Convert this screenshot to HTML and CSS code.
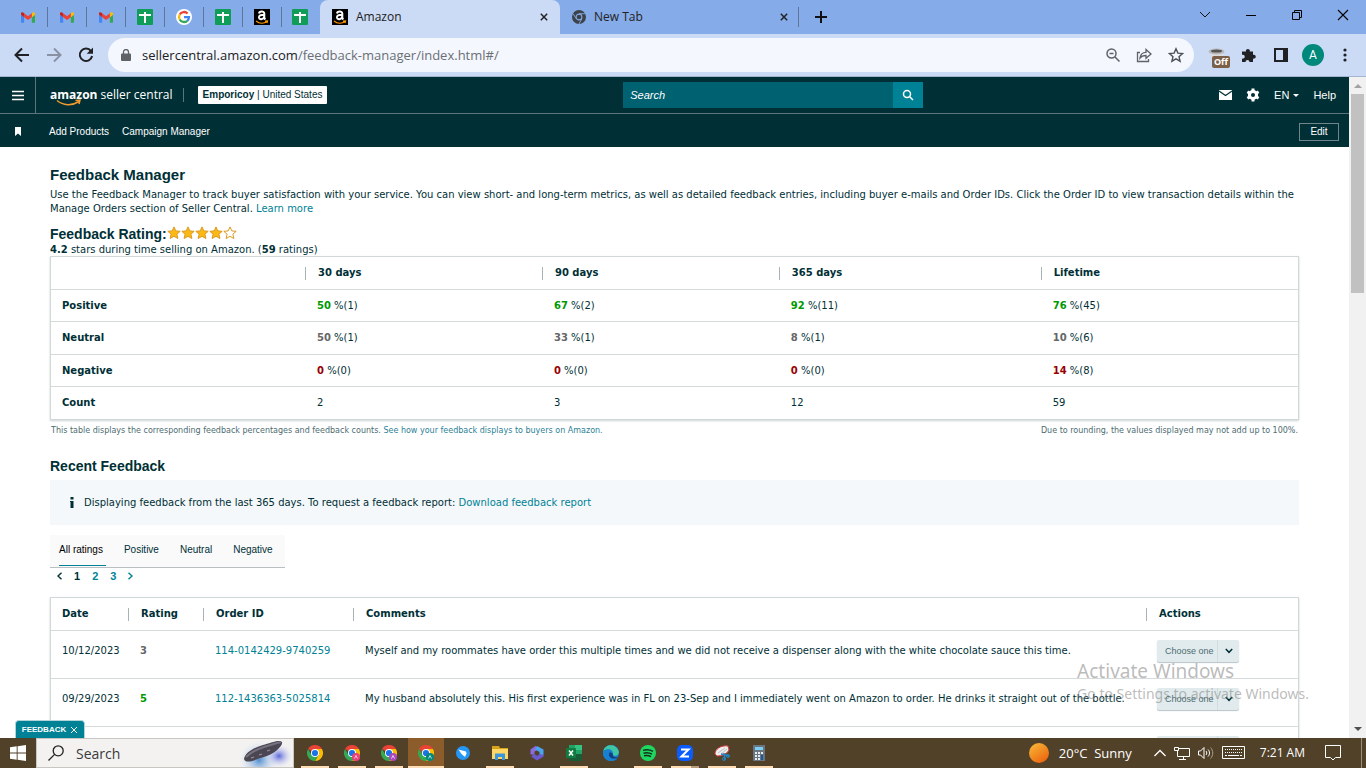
FILE: index.html
```html
<!DOCTYPE html>
<html lang="en">
<head>
<meta charset="utf-8">
<title>Amazon</title>
<link rel="stylesheet" href="styles.css">
</head>
<body>
<svg class="defs" aria-hidden="true">
  <symbol id="gmail" viewBox="0 0 16 12"><path d="M1 12h2.6V5.6L0 2.9V11a1 1 0 0 0 1 1z" fill="#4285f4"/><path d="M12.4 12H15a1 1 0 0 0 1-1V2.9l-3.6 2.7z" fill="#34a853"/><path d="M12.4 1.2v4.4L16 2.9V1.5C16 .1 14.400-.6 13.300.3z" fill="#fbbc04"/><path d="M3.600 5.600V1.200L8 4.500l4.400-3.300v4.400L8 8.900z" fill="#ea4335"/><path d="M0 1.500v1.400l3.600 2.700V1.200L2.700.5C1.600-.5 0 .2 0 1.500z" fill="#c5221f"/></symbol>
  <symbol id="sheet" viewBox="0 0 16 16"><rect width="16" height="16" rx="1" fill="#0f9d58"/><path d="M2 5h12v2H9v7H7V7H2zM7 3h2v3H7z" fill="#fff"/></symbol>
  <symbol id="google" viewBox="0 0 16 16"><circle cx="8" cy="8" r="8" fill="#fff"/><g fill="none" stroke-width="2.300"><path d="M3.700 5.500A5 5 0 0 1 11.600 4.500" stroke="#ea4335"/><path d="M3.700 10.500a5 5 0 0 1 0-5" stroke="#fbbc05"/><path d="M11.300 11.800a5 5 0 0 1-7.600-1.300" stroke="#34a853"/><path d="M8 8.100h5a5 5 0 0 1-1.700 3.700" stroke="#4285f4"/></g></symbol>
  <symbol id="amz" viewBox="0 0 16 16"><rect width="16" height="16"/><path d="M5 4.500C5.300 2.200 10.300 1.700 10.300 4.600v3.900c0 1 .3 1.300 1 2M10.200 5.800C6.500 5.800 4.800 6.600 5 8.700c.3 2.300 4.300 1.900 5.200-.7" fill="none" stroke="#fff" stroke-width="2"/><path d="M2 12c3.500 2.800 8 2.800 11 .6M11 12.200l2.500-.2-.5 2" fill="none" stroke="#f90" stroke-width="1.200"/></symbol>
  <symbol id="chrome" viewBox="0 0 16 16"><path d="M8 8L1.070 4A8 8 0 0 1 14.930 4z" fill="#ea4335"/><path d="M8 4h6.930A8 8 0 0 1 8 16l3.500-6z" fill="#fbbc04"/><path d="M1.070 4A8 8 0 0 0 8 16l3.460-6L8 8 4.540 10z" fill="#34a853"/><circle cx="8" cy="8" r="4" fill="#fff"/><circle cx="8" cy="8" r="3.100" fill="#1a73e8"/></symbol>
  <symbol id="x" viewBox="0 0 8 8"><path d="M.8.8l6.400 6.400M7.200.8L.8 7.200" fill="none" stroke="currentColor" stroke-width="1.500"/></symbol>
  <symbol id="star" viewBox="0 0 14 14"><path d="M7 .9l1.800 4 4.400.4-3.300 2.900 1 4.300L7 10.300l-3.900 2.200 1-4.300L.8 5.300l4.400-.4z" stroke="#d99a20" stroke-width="1"/></symbol>
  <symbol id="chev" viewBox="0 0 8 6"><path d="M.8 1L4 4.300 7.200 1" fill="none" stroke="#002f36" stroke-width="1.500"/></symbol>
</svg>

<div class="tabstrip">
  <div class="pinned"><svg class="gm"><use href="#gmail"/></svg></div>
  <div class="pinned"><svg class="gm"><use href="#gmail"/></svg></div>
  <div class="pinned"><svg class="gm"><use href="#gmail"/></svg></div>
  <div class="pinned"><svg class="i16"><use href="#sheet"/></svg></div>
  <div class="pinned"><svg class="i16"><use href="#google"/></svg></div>
  <div class="pinned"><svg class="i16"><use href="#sheet"/></svg></div>
  <div class="pinned"><svg class="i16"><use href="#amz"/></svg></div>
  <div class="pinned last"><svg class="i16"><use href="#sheet"/></svg></div>
  <div class="tab active"><svg class="i16"><use href="#amz"/></svg><span>Amazon</span><button aria-label="Close Amazon tab"><svg class="i8"><use href="#x"/></svg></button></div>
  <div class="tab other"><svg class="i14" viewBox="0 0 16 16"><circle cx="8" cy="8" r="8" fill="#3c4248"/><path d="M8 4.200h7M4.700 9.900L1.200 4M11.300 9.900L8 16" stroke="#85abe8" stroke-width="1"/><circle cx="8" cy="8" r="3.300" fill="#3c4248" stroke="#85abe8" stroke-width="1.200"/></svg><span>New Tab</span><button aria-label="Close New Tab"><svg class="i8"><use href="#x"/></svg></button></div>
  <button class="plus" aria-label="Open new tab"><svg class="i12" viewBox="0 0 12 12"><path d="M6 0v12M0 6h12" stroke="#111" stroke-width="2"/></svg></button>
  <div class="winctl">
    <button aria-label="Tab search"><svg class="i12" viewBox="0 0 12 12"><path d="M1 3l5 5 5-5" fill="none" stroke="#111"/></svg></button>
    <button aria-label="Minimize"><svg class="i12" viewBox="0 0 12 12"><path d="M1 6.500h10" stroke="#000"/></svg></button>
    <button aria-label="Restore"><svg class="i12" viewBox="0 0 12 12"><path d="M1.500 3.500h7v7h-7zM3.500 3V1.500h7v7H9" fill="none" stroke="#000"/></svg></button>
    <button aria-label="Close"><svg class="i12" viewBox="0 0 12 12"><path d="M1 1l10 10M11 1L1 11" stroke="#000" stroke-width="1.100"/></svg></button>
  </div>
</div>

<div class="toolbar">
  <button aria-label="Back"><svg class="i16" viewBox="0 0 16 16"><path d="M15 8H2M8 1.500L1.500 8 8 14.500" fill="none" stroke="#202124" stroke-width="2"/></svg></button>
  <button aria-label="Forward"><svg class="i16" viewBox="0 0 16 16"><path d="M1 8h13M8 1.500L14.500 8 8 14.500" fill="none" stroke="#8992a3" stroke-width="2"/></svg></button>
  <button aria-label="Reload"><svg class="i16" viewBox="0 0 16 16"><path d="M13 4.100A6.200 6.200 0 1 0 14.100 9" fill="none" stroke="#202124" stroke-width="2"/><path d="M15 .5v6.300H8.700z" fill="#202124"/></svg></button>
  <div class="omnibox">
    <svg class="lock" viewBox="0 0 10 12"><path d="M1 4.500h8a1 1 0 0 1 1 1V11a1 1 0 0 1-1 1H1a1 1 0 0 1-1-1V5.500a1 1 0 0 1 1-1z" fill="#5f6368"/><path d="M2.500 5V3a2.500 2.500 0 0 1 5 0v2" fill="none" stroke="#5f6368" stroke-width="1.300"/></svg>
    <div class="url">sellercentral.amazon.com<span>/feedback-manager/index.html#/</span></div>
    <svg class="i14" viewBox="0 0 14 14" fill="none" stroke="#5f6368" stroke-width="1.500"><circle cx="5.500" cy="5.500" r="4.500"/><path d="M9 9l4.500 4.500M3.500 5.500h4"/></svg>
    <svg class="i16" viewBox="0 0 16 16" fill="none" stroke="#5f6368" stroke-width="1.300"><path d="M4 5.500H1.500v9h11V12M4 11c.5-4 2.500-5.500 6-5.600V2.500L15 7l-5 4.300V8.500C7.500 8.500 5.500 9 4 11z"/></svg>
    <svg class="i16" viewBox="0 0 16 16" fill="none" stroke="#4d5156" stroke-width="1.400"><path d="M8 1.800l1.900 4.300 4.700.4L11 9.700l1.100 4.500L8 11.800l-4.100 2.400L5 9.700 1.400 6.500l4.700-.4z"/></svg>
  </div>
  <div class="ext">
    <svg class="cup" viewBox="0 0 22 20"><path d="M2 3h13v12H4z" fill="#dcdcdc"/><ellipse cx="8.500" cy="3.500" rx="8" ry="3" fill="#b8b8b8"/><ellipse cx="8.500" cy="3" rx="5.500" ry="1.500" fill="#555"/><rect x="4" y="8" width="18" height="12" rx="2" fill="#7b6047"/><text x="13" y="17" text-anchor="middle">Off</text></svg>
    <svg class="i14" viewBox="0 0 14 14"><path d="M0 3.500h4a2 2 0 1 1 3.800 0H11v3.300a2 2 0 1 1 0 3.700V14H7.500a2 2 0 1 0-4 0H0v-3.500a2 2 0 1 0 0-3.700z" fill="#202124"/></svg>
    <svg class="i14" viewBox="0 0 14 14"><path d="M1 1h12v12H1z" fill="none" stroke="#202124" stroke-width="2"/><path d="M9 1h5v12H9z" fill="#202124"/></svg>
    <span class="avatar">A</span>
    <svg class="dots" viewBox="0 0 4 14" fill="#202124"><circle cx="2" cy="2" r="1.600"/><circle cx="2" cy="7" r="1.600"/><circle cx="2" cy="12" r="1.600"/></svg>
  </div>
</div>

<div class="viewport">
  <div class="page">
    <header>
      <div class="top">
        <div class="brandside">
          <button class="burger" aria-label="Menu"><svg class="i12" viewBox="0 0 12 12"><path d="M0 2.500h12M0 6.500h12M0 10.500h12" stroke="#fff" stroke-width="1.300"/></svg></button>
          <a class="brand" href="#"><b>amazon</b> seller central<svg class="smile" viewBox="0 0 26 8"><path d="M1 1.500c6 5.200 15 5.500 22 1M19.500 1.500l4.500-.5-1 4" fill="none" stroke="#f29a2e" stroke-width="1.500"/></svg></a>
          <span class="bar"></span>
          <button class="store"><b>Emporicoy</b> | United States</button>
        </div>
        <form class="search"><input type="text" placeholder="Search" aria-label="Search"><button type="button" aria-label="Submit search"><svg class="i12" viewBox="0 0 12 12" fill="none" stroke="#fff" stroke-width="1.500"><circle cx="5" cy="5" r="3.500"/><path d="M7.500 7.500L11 11"/></svg></button></form>
        <nav class="tools">
          <a href="#" aria-label="Messages"><svg class="mail" viewBox="0 0 13 10"><path d="M0 0h13v10H0z" fill="#fff"/><path d="M0 1l6.500 4.500L13 1" fill="none" stroke="#002f36" stroke-width="1.200"/></svg></a>
          <a href="#" aria-label="Settings"><svg class="gear" viewBox="0 0 14 14"><circle cx="7" cy="7" r="3.500" fill="none" stroke="#fff" stroke-width="3.200"/><path d="M7 .5v13M1.400 3.750l11.200 6.500M1.400 10.250l11.200-6.500" stroke="#fff" stroke-width="3"/><circle cx="7" cy="7" r="2" fill="#002f36"/></svg></a>
          <a class="lang" href="#">EN<svg class="caret" viewBox="0 0 6 3"><path d="M0 0h6L3 3z" fill="#fff"/></svg></a>
          <a href="#">Help</a>
        </nav>
      </div>
      <div class="favs">
        <svg class="mark" viewBox="0 0 6 9"><path d="M0 0h6v9L3 6.500 0 9z" fill="#fff"/></svg>
        <a href="#">Add Products</a><a href="#">Campaign Manager</a>
        <button>Edit</button>
      </div>
    </header>

    <main>
      <h1>Feedback Manager</h1>
      <p class="intro">Use the Feedback Manager to track buyer satisfaction with your service. You can view short- and long-term metrics, as well as detailed feedback entries, including buyer e-mails and Order IDs. Click the Order ID to view transaction details within the Manage Orders section of Seller Central. <a href="#">Learn more</a></p>
      <div class="rating"><h2>Feedback Rating:</h2><span class="stars"><svg class="i14" fill="#fdb913"><use href="#star"/></svg><svg class="i14" fill="#fdb913"><use href="#star"/></svg><svg class="i14" fill="#fdb913"><use href="#star"/></svg><svg class="i14" fill="#fdb913"><use href="#star"/></svg><svg class="i14" fill="#fff"><use href="#star"/></svg></span></div>
      <p class="score"><b>4.2</b> stars during time selling on Amazon. (<b>59</b> ratings)</p>

      <table class="grid summary">
        <colgroup><col class="s1"><col class="s2"><col class="s3"><col class="s4"><col></colgroup>
        <thead><tr><th></th><th><i></i>30 days</th><th><i></i>90 days</th><th><i></i>365 days</th><th><i></i>Lifetime</th></tr></thead>
        <tbody>
          <tr class="pos"><th>Positive</th><td><b>50</b> %(1)</td><td><b>67</b> %(2)</td><td><b>92</b> %(11)</td><td><b>76</b> %(45)</td></tr>
          <tr class="neu"><th>Neutral</th><td><b>50</b> %(1)</td><td><b>33</b> %(1)</td><td><b>8</b> %(1)</td><td><b>10</b> %(6)</td></tr>
          <tr class="neg"><th>Negative</th><td><b>0</b> %(0)</td><td><b>0</b> %(0)</td><td><b>0</b> %(0)</td><td><b>14</b> %(8)</td></tr>
          <tr><th>Count</th><td>2</td><td>3</td><td>12</td><td>59</td></tr>
        </tbody>
      </table>
      <div class="notes"><span>This table displays the corresponding feedback percentages and feedback counts. <a href="#">See how your feedback displays to buyers on Amazon.</a></span><span>Due to rounding, the values displayed may not add up to 100%.</span></div>

      <h2 class="recent">Recent Feedback</h2>
      <div class="info"><svg class="inf" viewBox="0 0 4 11"><path d="M.5 0h3v2.500h-3zM0 4h3.500v7h-3V5H0z" fill="#002f36"/></svg><span>Displaying feedback from the last 365 days. To request a feedback report: <a href="#">Download feedback report</a></span></div>
      <div class="filters"><button class="on">All ratings</button><button>Positive</button><button>Neutral</button><button>Negative</button></div>
      <nav class="pager">
        <a href="#" aria-label="Previous"><svg class="ar" viewBox="0 0 5 8"><path d="M4.500.8L1 4l3.500 3.200" fill="none" stroke="#002f36" stroke-width="1.400"/></svg></a>
        <a class="cur" href="#">1</a><a href="#">2</a><a href="#">3</a>
        <a href="#" aria-label="Next"><svg class="ar" viewBox="0 0 5 8"><path d="M.5.8L4 4 .5 7.200" fill="none" stroke="#008296" stroke-width="1.400"/></svg></a>
      </nav>

      <table class="grid entries">
        <colgroup><col class="e1"><col class="e2"><col class="e3"><col><col class="e5"></colgroup>
        <thead><tr><th>Date</th><th><i></i>Rating</th><th><i></i>Order ID</th><th><i></i>Comments</th><th><i></i>Actions</th></tr></thead>
        <tbody>
          <tr class="neu"><td>10/12/2023</td><td><b>3</b></td><td><a href="#">114-0142429-9740259</a></td><td>Myself and my roommates have order this multiple times and we did not receive a dispenser along with the white chocolate sauce this time.</td><td><span class="pick"><select aria-label="Action for order 114-0142429-9740259"><option>Choose one</option></select><span><svg class="cv"><use href="#chev"/></svg></span></span></td></tr>
          <tr class="pos"><td>09/29/2023</td><td><b>5</b></td><td><a href="#">112-1436363-5025814</a></td><td>My husband absolutely this. His first experience was in FL on 23-Sep and I immediately went on Amazon to order. He drinks it straight out of the bottle.</td><td><span class="pick"><select aria-label="Action for order 112-1436363-5025814"><option>Choose one</option></select><span><svg class="cv"><use href="#chev"/></svg></span></span></td></tr>
          <tr><td></td><td></td><td></td><td></td><td><span class="pick"><select aria-label="Action"><option>Choose one</option></select><span><svg class="cv"><use href="#chev"/></svg></span></span></td></tr>
        </tbody>
      </table>
    </main>
    <button class="fb">FEEDBACK <svg class="i8" viewBox="0 0 8 8"><path d="M1 1l6 6M7 1L1 7" stroke="#fff"/></svg></button>
  </div>
  <div class="scroll"><svg class="sa" viewBox="0 0 8 4"><path d="M0 4h8L4 0z" fill="#a3a3a3"/></svg><span class="thumb"></span><svg class="sa down" viewBox="0 0 8 4"><path d="M0 0h8L4 4z" fill="#505050"/></svg></div>
  <div class="activate"><p class="big">Activate Windows</p><p>Go to Settings to activate Windows.</p></div>
</div>

<div class="taskbar">
  <button class="start" aria-label="Start"><svg class="i16" viewBox="0 0 16 16" fill="#fff"><path d="M0 2.300L6.700 1.300v6.300H0zM7.600 1.200L16 0v7.600H7.600zM0 8.400h6.700v6.300L0 13.700zM7.600 8.400H16V16l-8.400-1.200z"/></svg></button>
  <div class="tsearch">
    <svg class="i16" viewBox="0 0 16 16" fill="none" stroke="#222" stroke-width="1.300"><circle cx="10.200" cy="5.800" r="5"/><path d="M6.600 9.400L.5 15.500"/></svg>
    <input type="text" placeholder="Search" aria-label="Windows search">
    <svg class="ufo" viewBox="0 0 54 28"><defs><radialGradient id="glow"><stop offset="0" stop-color="#4f8fd0"/><stop offset="1" stop-color="#dfe2f6" stop-opacity="0"/></radialGradient><radialGradient id="glow2"><stop offset="0" stop-color="#5a68d8"/><stop offset="1" stop-color="#e0e0f8" stop-opacity="0"/></radialGradient></defs><ellipse cx="20" cy="21" rx="20" ry="19" fill="url(#glow)"/><ellipse cx="40" cy="17" rx="14" ry="12" fill="url(#glow2)"/><path d="M5 20C6 13 17 8 24 6 31 4 40 0 43 3c1 4-8 12-18 15-8 2-18 8-20 2z" fill="#4a4753"/><path d="M7 18c5-5 12-8 18-10 7-2 12-4 17-5" fill="none" stroke="#77717f" stroke-width="2"/><path d="M12 19l3-1m5-2l3-1m5-3l3-1" stroke="#a58a9d" stroke-width="1.200"/></svg>
  </div>
  <div class="apps">
    <button class="run" aria-label="Chrome"><svg class="i16"><use href="#chrome"/></svg></button>
    <button class="run" aria-label="Chrome profile 2"><svg class="i16" viewBox="0 0 16 16"><use href="#chrome"/><circle cx="12" cy="12" r="4" fill="#ec407a"/><path d="M10.500 13.500L12 10.500l1.500 3" fill="none" stroke="#fff" stroke-width=".7"/></svg></button>
    <button class="run" aria-label="Chrome profile 3"><svg class="i16" viewBox="0 0 16 16"><use href="#chrome"/><circle cx="12" cy="12" r="4" fill="#ab47bc"/><path d="M10.500 13.500L12 10.500l1.500 3" fill="none" stroke="#fff" stroke-width=".7"/></svg></button>
    <button class="run front" aria-label="Chrome profile 4"><svg class="i16" viewBox="0 0 16 16"><use href="#chrome"/><circle cx="12" cy="12" r="4" fill="#00897b"/><path d="M10.500 13.500L12 10.500l1.500 3" fill="none" stroke="#fff" stroke-width=".7"/></svg></button>
    <button aria-label="Bird app"><svg class="i14" viewBox="0 0 14 14"><circle cx="7" cy="7" r="7" fill="#2496f3"/><path d="M2.500 3.500L10 5.500l.5 2L9 11 5.500 8z" fill="#fff"/></svg></button>
    <button class="run" aria-label="File Explorer"><svg class="i16" viewBox="0 0 16 16"><path d="M0 1h7l1 2h8v11H0z" fill="#d9a21b"/><path d="M0 4h16v10H0z" fill="#ffd766"/><path d="M3 15V8.500h10V15h-3v-3H6v3z" fill="#3a96dd"/></svg></button>
    <button aria-label="Microsoft 365"><svg class="i16" viewBox="0 0 16 16" fill="none" stroke-width="4"><path d="M8 2.500L3.500 5.500v4" stroke="#8c6be0"/><path d="M7 2.800l5.500 3v4.500" stroke="#4aa5f0"/><path d="M12.500 9.500v1L8 13.200l-4.500-3" stroke="#6a5ad0"/></svg></button>
    <button class="run" aria-label="Excel"><svg class="i16" viewBox="0 0 16 16"><path d="M3 0h13v16H3z" fill="#21a366"/><path d="M9 0h7v5H9z" fill="#33c481"/><path d="M3 9h13v7H3z" fill="#185c37"/><rect y="3" width="10" height="10" rx="1" fill="#107c41"/><path d="M3 5.500l4 5M7 5.500l-4 5" stroke="#fff" stroke-width="1.500"/></svg></button>
    <button aria-label="Edge"><svg class="i16" viewBox="0 0 16 16"><circle cx="8" cy="8" r="8" fill="#1b7fd0"/><path d="M.3 6C2-1.500 13-2 15.700 6c1 4-3 6-6 4 2-5-5-7-9.400-4z" fill="#3fc6a4"/><path d="M0 7c3-4 8-3 9-1-5-1-5 6 5 8-7 5-15 0-14-7z" fill="#1780d0"/><path d="M7 7c-3 4 1 8 7 6l1-1c-4 1-6-1-5-3z" fill="#123f82"/></svg></button>
    <button class="run" aria-label="Spotify"><svg class="i16" viewBox="0 0 16 16"><circle cx="8" cy="8" r="8" fill="#1ed760"/><path d="M3 5.400c3.500-1 7-.7 10 1M3.500 8.200c3-.8 6-.5 8.500 1M4 10.800c2.500-.6 5-.3 7 .9" fill="none" stroke="#14301c" stroke-width="1.500"/></svg></button>
    <button class="run multi" aria-label="Zoom"><svg class="i16" viewBox="0 0 16 16"><rect width="16" height="16" rx="5" fill="#0b5cff"/><path d="M4 4.500h7.500L4.500 11.500H12" fill="none" stroke="#fff" stroke-width="2"/></svg></button>
    <button class="run" aria-label="Snipping Tool"><svg class="i16" viewBox="0 0 16 16"><path d="M1 9C1 4 7 0 14 1l1 4C13 9 8 11 3 11z" fill="#eee" stroke="#d53c3c"/><path d="M4 8l7-5m-4 6l6-5" stroke="#bbb"/><path d="M7 9l8 2m-5-3l1 7" stroke="#2385c4" stroke-width="1.500"/><circle cx="10" cy="14" r="1.500" fill="none" stroke="#2385c4"/><circle cx="14" cy="11" r="1.500" fill="none" stroke="#2385c4"/></svg></button>
    <button class="run" aria-label="Calculator"><svg class="i16" viewBox="0 0 16 16"><path d="M2 0h12v16H2z" fill="#6b7580"/><path d="M4 2h8v3H4z" fill="#7bd0f7"/><path d="M4 7h2v2H4zm3 0h2v2H7zm3 0h2v2h-2zM4 10h2v2H4zm3 0h2v2H7zM4 13h2v2H4zm3 0h2v2H7z" fill="#e8edf0"/><path d="M10 10h2v5h-2z" fill="#17599c"/></svg></button>
  </div>
  <div class="tray">
    <svg class="sun" viewBox="0 0 20 20"><defs><linearGradient id="sung" x1="0" y1="0" x2=".7" y2="1"><stop offset="0" stop-color="#f8bd3a"/><stop offset="1" stop-color="#ed650f"/></linearGradient></defs><circle cx="10" cy="10" r="10" fill="url(#sung)"/></svg>
    <span class="temp">20°C&nbsp; Sunny</span>
    <svg class="i12" viewBox="0 0 12 12"><path d="M.5 9L6 3.500 11.500 9" fill="none" stroke="#fff" stroke-width="1.300"/></svg>
    <svg class="i16" viewBox="0 0 16 14" fill="none" stroke="#fff"><path d="M5 2.500h10.500v8H3.500V5M9.500 11v2.500M5 13.500h7M.5 1.500h4v3h-4z"/></svg>
    <svg class="i16" viewBox="0 0 16 14" fill="none" stroke="#fff"><path d="M.5 5h2L6 1.500v11L2.500 9h-2zM8 5c1 1 1 3 0 4M10 3.500c2 2 2 5 0 7"/><path d="M12.500 1.500c3 3 3 8 0 11" stroke="#aaa08c"/></svg>
    <svg class="kb" viewBox="0 0 24 14"><path d="M.5.500h22v12H.5z" fill="none" stroke="#fff"/><path d="M3 3.500h18M3 6.500h18" stroke="#fff" stroke-dasharray="1 1"/><path d="M3 9.500h2m1 0h11m1 0h2" stroke="#fff"/></svg>
    <span class="clock">7:21 AM</span>
    <svg class="i16" viewBox="0 0 16 16"><path d="M.5.500h15v12h-5L8 15l-2.500-2.500h-5z" fill="none" stroke="#fff"/></svg>
  </div>
</div>
</body>
</html>
```
FILE: styles.css
```css
* { box-sizing: border-box; }
body { margin: 0; height: 100vh; display: flex; flex-direction: column; overflow: hidden; font-family: "DejaVu Sans", sans-serif; font-size: 10px; line-height: 14px; color: #002f36; background: #fff; }
button { border: 0; padding: 0; background: none; font: inherit; color: inherit; display: flex; align-items: center; justify-content: center; }
a { color: #008296; text-decoration: none; }
h1, h2, p { margin: 0; }
svg { display: block; flex: none; }
.defs { position: absolute; width: 0; height: 0; }
.i8 { width: 8px; height: 8px; }
.i12 { width: 12px; height: 12px; }
.i14 { width: 14px; height: 14px; }
.i16 { width: 16px; height: 16px; }

/* Browser tabs */
.tabstrip { flex: none; height: 34px; display: flex; padding-left: 9px; background: #85abe8; font: 12px/16px "Open Sans", sans-serif; color: #222; }
.pinned { width: 39px; display: flex; align-items: center; justify-content: center; padding-right: 2px; background: linear-gradient(#5d7699, #5d7699) right center / 1px 20px no-repeat; }
.pinned.last { width: 38px; background: none; }
.gm { width: 14px; height: 11px; }
.tab { display: flex; align-items: center; gap: 8px; width: 240px; padding: 0 12px; }
.tab span { flex: 1; }
.tab.active { background: #cbdbf6; border-radius: 8px 8px 0 0; }
.tab.other { width: 239px; padding: 0 11px 0 12px; background: linear-gradient(#5d7699, #5d7699) right center / 1px 20px no-repeat; }
.plus { width: 44px; }
.winctl { margin-left: auto; display: flex; height: 29px; }
.winctl button { width: 46px; }

.toolbar { flex: none; height: 43px; display: flex; align-items: center; padding: 0 19px 0 6px; background: #cbdbf6; border-bottom: 1px solid #a5b5d0; }
.toolbar > button { width: 32px; height: 32px; }
.omnibox { flex: 1; display: flex; align-items: center; gap: 16px; height: 34px; margin-left: 6px; padding: 0 10px 0 13px; border-radius: 17px; background: #f4f7fd; }
.lock { width: 10px; height: 12px; }
.url { flex: 1; margin-left: -5px; font: 13px/20px "Open Sans", sans-serif; color: #202124; }
.url span { color: #6b6f75; }
.ext { display: flex; align-items: center; gap: 18px; margin-left: 14px; }
.cup { width: 22px; height: 20px; margin: 6px -6px 0 0; }
.cup text { font: bold 9px "Open Sans", sans-serif; fill: #fff; }
.avatar { width: 22px; height: 22px; margin: 0 -4px; border-radius: 50%; background: #00897b; color: #fff; font: 12px/22px Roboto, sans-serif; text-align: center; }
.dots { width: 4px; height: 14px; margin-left: 5px; }

/* Page area */
.viewport { position: relative; flex: 1; min-height: 0; display: flex; }
.page { position: relative; flex: 1; min-width: 0; overflow: hidden; }
.scroll { width: 17px; background: #f1f1f1; display: flex; flex-direction: column; align-items: center; padding: 7px 0; }
.thumb { width: 13px; height: 199px; margin-top: 6px; background: #c1c1c1; }
.sa { width: 8px; height: 4px; }
.sa.down { margin-top: auto; }

header { background: #002f36; color: #fff; font: 11px/14px "Liberation Sans", sans-serif; }
header a { color: #fff; }
.top { height: 37px; display: flex; justify-content: space-between; align-items: center; border-bottom: 1px solid #5c757b; }
.brandside { display: flex; align-items: center; height: 100%; }
.burger { width: 36px; height: 100%; border-right: 1px solid #5c757b; }
.brand { position: relative; margin-left: 14px; font: 12px/16px "Open Sans", sans-serif; white-space: nowrap; }
.smile { position: absolute; left: 6px; top: 12px; width: 26px; height: 8px; }
.bar { width: 1px; height: 14px; margin: 0 14px 0 10px; background: #5c757b; }
.store { height: 18px; padding: 0 5px; border-radius: 1px; background: #fff; color: #002f36; font-size: 10px; white-space: pre; }
.search { display: flex; width: 300px; height: 26px; }
.search input { flex: 1; min-width: 0; border: 0; padding: 0 7px; background: #006170; font: italic 11px "Liberation Sans", sans-serif; color: #fff; }
.search input::placeholder { color: #fff; opacity: 1; }
.search button { width: 30px; background: #008296; }
.tools { display: flex; align-items: center; gap: 14px; padding-right: 13px; }
.mail { width: 13px; height: 10px; }
.gear { width: 14px; height: 14px; }
.lang { display: flex; align-items: center; gap: 4px; }
.caret { width: 6px; height: 3px; }
.favs { height: 33px; display: flex; align-items: center; gap: 13px; padding: 2px 10px 0 15px; font-size: 10px; }
.mark { width: 6px; height: 9px; margin-right: 15px; }
.favs button { margin-left: auto; width: 40px; height: 18px; border: 1px solid #6f858a; }

main { padding: 19px 50px 0; }
h1, h2 { font-family: "Liberation Sans", sans-serif; font-weight: bold; }
h1 { font-size: 15px; line-height: 18px; }
h2 { font-size: 14px; line-height: 18px; }
.intro { margin: 4px 0 9px; }
.rating { display: flex; align-items: center; }
.stars { display: flex; margin-top: -2px; }
.score { line-height: 13px; }
.grid { width: 100%; border-spacing: 0; table-layout: fixed; border: 1px solid #d0d8d9; box-shadow: 0 1px 2px #ccd3d4; }
.grid th, .grid td { height: 33px; padding: 0 11px; text-align: left; font-weight: normal; border-bottom: 1px solid #d5dbdb; white-space: nowrap; }
.grid th { font-weight: bold; }
.grid th i { display: inline-block; vertical-align: middle; width: 1px; height: 13px; margin: 0 12px 0 -12px; background: #a7b4b6; }
.grid td { padding-left: 12px; }
.summary tbody tr:nth-child(odd) > *, .summary tbody tr:last-child > * { height: 32px; }
.summary tbody tr:last-child > * { border-bottom: 0; }
.s1 { width: 254px; } .s2 { width: 19%; } .s3 { width: 19%; } .s4 { width: 21%; }
.grid thead th + th { padding-left: 12px; }
.pos b { color: #090; }
.neu b { color: #666; }
.neg b { color: #900; }
.notes { display: flex; justify-content: space-between; padding: 5px 1px 0; font-size: 8px; line-height: 12px; color: #4d6b71; }
.notes a { color: #2d7f96; }
.recent { margin-top: 20px; }
.info { display: flex; align-items: center; gap: 10px; height: 45px; margin-top: 5px; padding-left: 20px; background: #f4f8fa; }
.inf { width: 4px; height: 11px; }
.filters { display: flex; width: max-content; height: 33px; margin-top: 10px; padding: 0 12px 1px 9px; gap: 21px; background: #fafafa; border-bottom: 1px solid #babfc1; font: 10px/14px "Liberation Sans", sans-serif; }
.filters button { border-bottom: 1px solid transparent; }
.filters .on { border-bottom-color: #008296; color: #000; padding-right: 3px; margin-right: -3px; }
.pager { display: flex; align-items: center; gap: 12px; height: 16px; padding-left: 7px; font: bold 11px/14px "Liberation Sans", sans-serif; }
.pager .cur { color: #002f36; }
.ar { width: 5px; height: 8px; }
.entries { margin-top: 13px; }
.entries tbody td { height: 48px; padding-bottom: 8px; }
.entries tbody td:first-child { padding-left: 11px; }
.e1 { width: 77px; } .e2 { width: 75px; } .e3 { width: 150px; } .e5 { width: 152px; }
.entries tbody td:last-child { padding-left: 11px; }
.pick { display: grid; grid-template-columns: 60px 22px; width: 82px; height: 22px; background: #e1ebed; border-radius: 2px; box-shadow: 0 1px 1px #b8c4c6; }
.pick select { grid-area: 1 / 1 / 2 / 3; appearance: none; border: 0; margin: 0; padding: 0 8px; background: none; font: 9px/12px "Liberation Sans", sans-serif; color: #4d6b71; }
.pick > span { grid-area: 1 / 2; display: flex; align-items: center; justify-content: center; border-left: 1px solid #d0dddf; pointer-events: none; }
.cv { width: 8px; height: 6px; }
.fb { position: absolute; left: 15px; bottom: 0; width: 70px; height: 18px; gap: 4px; border: 1px solid #b5d4d9; border-bottom: 0; border-radius: 4px 4px 0 0; background: #008296; color: #fff; font: bold 8px/14px "Liberation Sans", sans-serif; }
.activate { position: absolute; right: 57px; bottom: 34px; color: rgba(120, 120, 120, .5); font: 14px/20px "Noto Sans", sans-serif; pointer-events: none; white-space: nowrap; }
.activate .big { font-size: 19px; line-height: 26px; }

/* Windows taskbar */
.taskbar { flex: none; height: 30px; display: flex; background: #514129; color: #fff; font: 14px/20px "Open Sans", sans-serif; }
.start { width: 36px; }
.tsearch { width: 258px; display: flex; align-items: center; gap: 12px; padding-left: 11px; background: #f3f2f1; border: 1px solid #c9c6c2; overflow: hidden; }
.tsearch input { flex: 1; min-width: 0; border: 0; padding: 0; background: none; font: 14px "Open Sans", sans-serif; }
.tsearch input::placeholder { color: #3a3a3a; opacity: 1; }
.ufo { width: 54px; height: 28px; }
.apps { display: flex; gap: 1px; margin-left: 3px; }
.apps button { width: 36px; }
.apps .run { background: linear-gradient(#ffdcb4, #ffdcb4) center bottom / 28px 2px no-repeat; }
.apps .run.front { background: linear-gradient(#ffdcb4, #ffdcb4) center bottom / 36px 2px no-repeat #8c5d2a; }
.apps .run.multi { background: linear-gradient(90deg, #ffdcb4 70%, #b89c7c 70%) center bottom / 28px 2px no-repeat; }
.tray { margin-left: auto; display: flex; align-items: center; gap: 8px; margin-right: 4px; padding-right: 20px; border-right: 1px solid #9a8e7c; font-size: 13px; white-space: nowrap; }
.sun { width: 20px; height: 20px; }
.temp { margin: 0 14px 0 2px; }
.kb { width: 24px; height: 14px; }
.clock { margin: 0 12px 0 6px; font-size: 12px; }
```
